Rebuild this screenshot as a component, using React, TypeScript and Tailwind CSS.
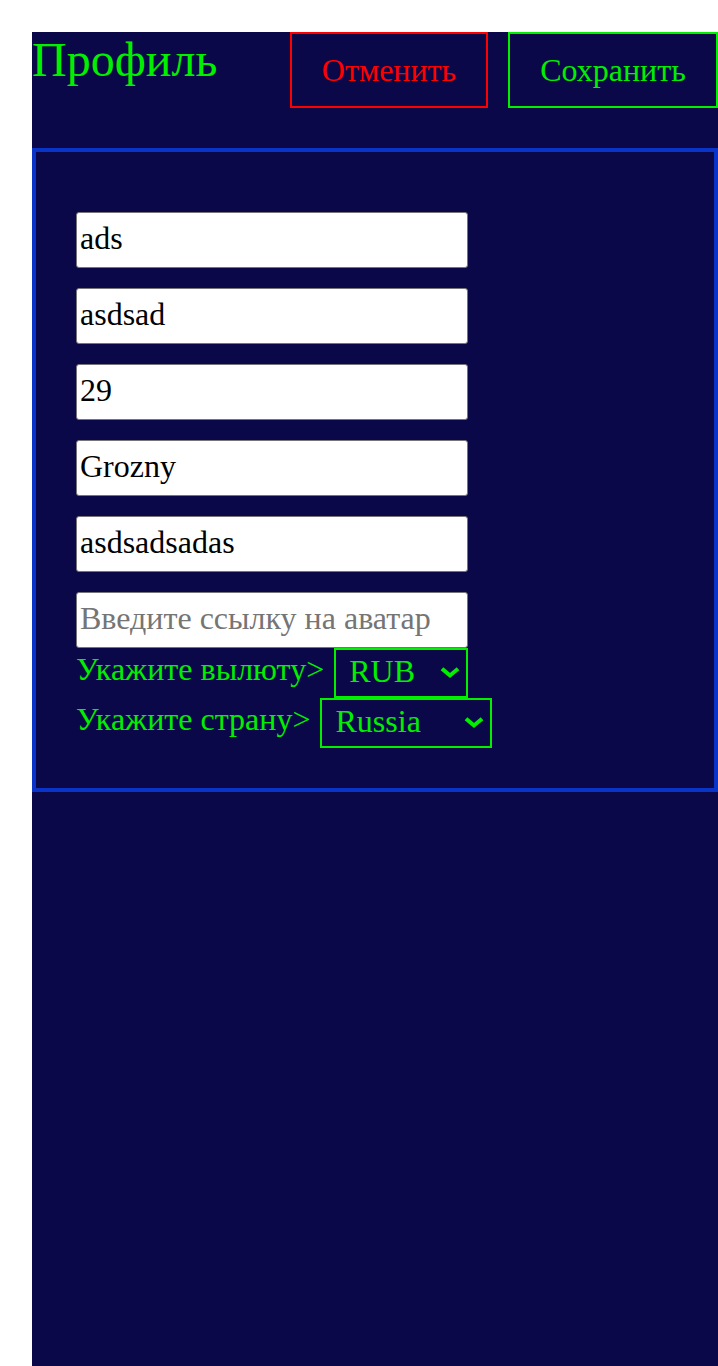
import { useState } from 'react';

function Chevron() {
  return (
    <svg
      viewBox="0 0 20 12"
      className="pointer-events-none absolute right-[8px] top-1/2 h-[12px] w-[20px] -translate-y-1/2"
      fill="none"
      stroke="#00f000"
      strokeWidth="4"
      strokeLinecap="square"
    >
      <path d="M3.5 3 L10 8.5 L16.5 3" />
    </svg>
  );
}

const fields = ['ads', 'asdsad', '29', 'Grozny', 'asdsadsadas'];

export default function App() {
  const [currency, setCurrency] = useState('RUB');
  const [country, setCountry] = useState('Russia');

  return (
    <div className="min-h-screen bg-white pl-8 pt-8 font-['Liberation_Serif',serif]">
      <div className="min-h-[1334px] bg-[#0a0848]">
        <header className="flex h-[116px] items-start justify-between">
          <h1 className="text-[48px] leading-[1.15] text-[#00f000]">Профиль</h1>
          <div className="flex gap-5">
            <button className="h-[76px] w-[198px] border-2 border-[#ff0000] text-[32px] text-[#ff0000]">
              Отменить
            </button>
            <button className="h-[76px] w-[210px] border-2 border-[#00f000] text-[32px] text-[#00f000]">
              Сохранить
            </button>
          </div>
        </header>

        <section className="border-4 border-[#0a33c8] px-10 pt-[60px] pb-10">
          <div className="flex flex-col gap-5">
            {fields.map((v) => (
              <input
                key={v}
                defaultValue={v}
                className="h-[56px] w-[392px] rounded-[3px] border border-[#767676] bg-white px-[3px] pb-[4px] font-['Liberation_Serif',serif] text-[32px] text-black outline-none"
              />
            ))}
            <input
              placeholder="Введите ссылку на аватар"
              className="h-[56px] w-[392px] rounded-[3px] border border-[#767676] bg-white px-[3px] pb-[4px] font-['Liberation_Serif',serif] text-[32px] text-black outline-none placeholder:text-[#757575]"
            />
          </div>

          <div className="flex h-[50px] items-start gap-[10px] text-[32px] leading-[1.15] text-[#00f000]">
            <span className="pt-[3px]">Укажите вылюту&gt;</span>
            <div className="relative">
              <select
                value={currency}
                onChange={(e) => setCurrency(e.target.value)}
                className="h-[50px] w-[134px] appearance-none border-2 border-[#00f000] bg-transparent pb-[4px] pl-[13px] font-['Liberation_Serif',serif] text-[32px] leading-[1.15] text-[#00f000] outline-none"
              >
                <option className="bg-[#0a0848]">RUB</option>
                <option className="bg-[#0a0848]">USD</option>
                <option className="bg-[#0a0848]">EUR</option>
              </select>
              <Chevron />
            </div>
          </div>

          <div className="flex h-[50px] items-start gap-[10px] text-[32px] leading-[1.15] text-[#00f000]">
            <span className="pt-[3px]">Укажите страну&gt;</span>
            <div className="relative">
              <select
                value={country}
                onChange={(e) => setCountry(e.target.value)}
                className="h-[50px] w-[172px] appearance-none border-2 border-[#00f000] bg-transparent pb-[4px] pl-[13px] font-['Liberation_Serif',serif] text-[32px] leading-[1.15] text-[#00f000] outline-none"
              >
                <option className="bg-[#0a0848]">Russia</option>
                <option className="bg-[#0a0848]">Ukraine</option>
                <option className="bg-[#0a0848]">Belarus</option>
              </select>
              <Chevron />
            </div>
          </div>
        </section>
      </div>
    </div>
  );
}
